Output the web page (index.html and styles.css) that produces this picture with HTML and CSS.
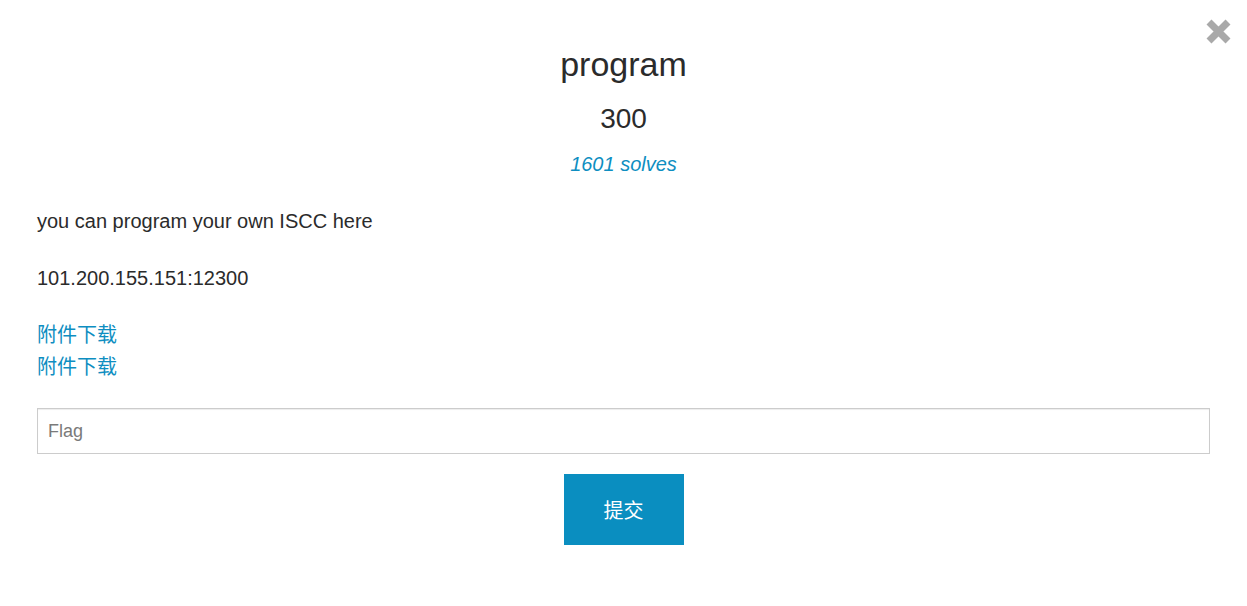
FILE: index.html
```html
<!DOCTYPE html>
<html lang="en">
<head>
<meta charset="utf-8">
<title>program</title>
<link rel="stylesheet" href="styles.css">
</head>
<body>
<div class="modal">
  <button class="close" aria-label="Close">
    <svg width="27" height="27" viewBox="0 0 27 27"><path d="M4 4 L23 23 M23 4 L4 23" stroke="#a9a9a9" stroke-width="7" stroke-linecap="butt" fill="none"/></svg>
  </button>
  <h3 class="title">program</h3>
  <h4 class="value">300</h4>
  <p class="solves"><a href="#">1601 solves</a></p>
  <div class="desc">
    <p>you can program your own ISCC here</p>
    <p>101.200.155.151:12300</p>
    <p class="files"><a href="#">附件下载</a><br><a href="#">附件下载</a></p>
  </div>
  <form class="flag-form">
    <input class="flag-input" type="text" placeholder="Flag">
    <div class="actions"><button type="button" class="submit">提交</button></div>
  </form>
</div>
</body>
</html>
```
FILE: styles.css
```css
html, body {
  margin: 0;
  padding: 0;
  background: #fff;
}
body {
  font-family: "Liberation Sans", Arial, "Noto Sans CJK SC", sans-serif;
  color: #2b2b2b;
}
.modal {
  position: relative;
  padding: 44px 37px 0 37px;
}
.close {
  position: absolute;
  top: 18px;
  right: 15px;
  width: 27px;
  height: 27px;
  padding: 0;
  border: 0;
  background: none;
  cursor: pointer;
}
.close svg { display: block; }
.title {
  margin: 0;
  font-size: 34px;
  line-height: 40px;
  font-weight: normal;
  text-align: center;
}
.value {
  margin: 18px 0 0;
  font-size: 28px;
  line-height: 34px;
  font-weight: normal;
  text-align: center;
}
.solves {
  margin: 16px 0 0;
  font-size: 20px;
  line-height: 24px;
  font-style: italic;
  text-align: center;
}
a {
  color: #0e8ec1;
  text-decoration: none;
}
.desc {
  margin-top: 29px;
  font-size: 20px;
  line-height: 32px;
}
.desc p {
  margin: 0 0 25px;
}
.flag-input {
  display: block;
  box-sizing: border-box;
  width: 100%;
  height: 46px;
  margin: 0;
  padding: 0 10px;
  border: 1px solid #cccccc;
  border-radius: 0;
  box-shadow: inset 0 1px 1px rgba(0,0,0,0.075);
  font-family: "Liberation Sans", Arial, sans-serif;
  font-size: 18px;
  color: #333;
  outline: none;
}
.flag-input::placeholder { color: #7a7a7a; }
.actions {
  display: flex;
  justify-content: center;
  margin-top: 20px;
}
.submit {
  width: 120px;
  height: 71px;
  border: 0;
  border-radius: 0;
  background: #0a8ec0;
  color: #fff;
  font-family: "Liberation Sans", "Noto Sans CJK SC", sans-serif;
  font-size: 20px;
  cursor: pointer;
}
```
